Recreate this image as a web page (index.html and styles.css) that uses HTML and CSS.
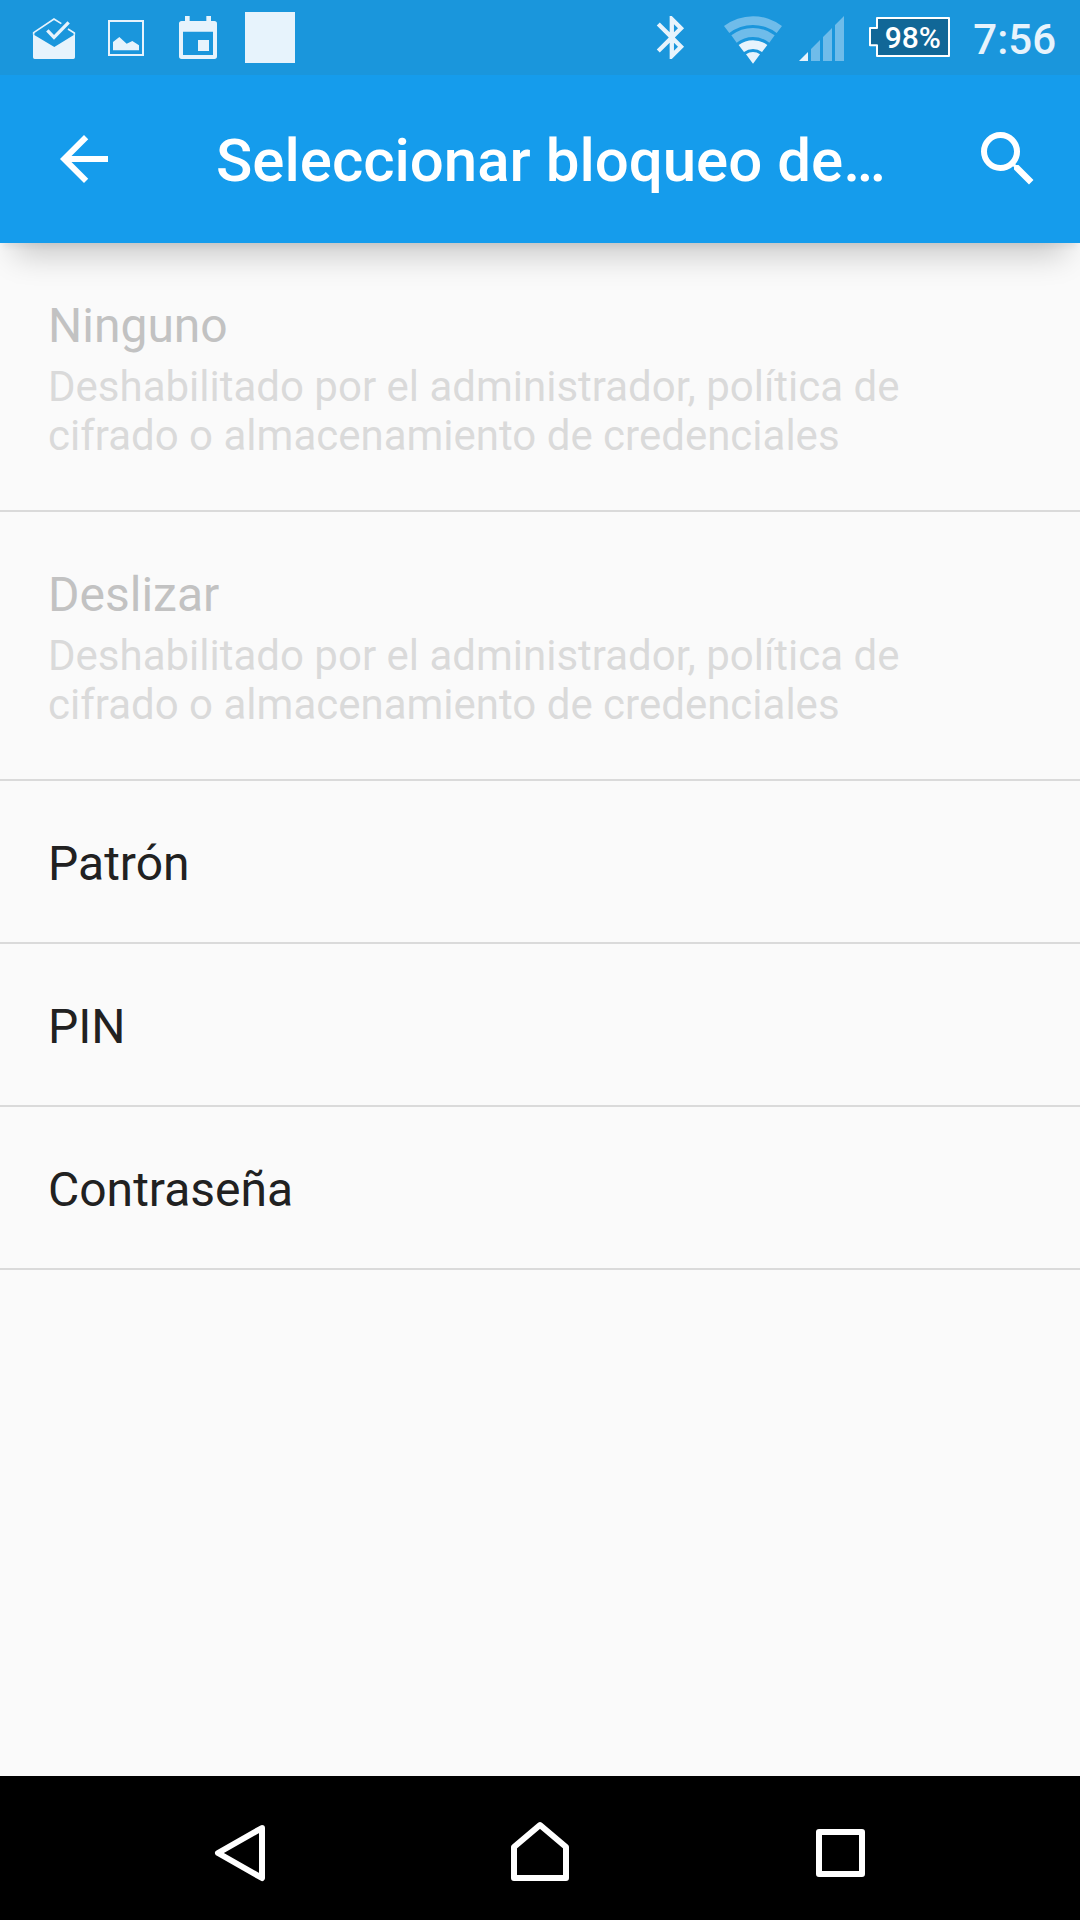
FILE: index.html
```html
<!DOCTYPE html>
<html lang="es">
<head>
<meta charset="utf-8">
<meta name="viewport" content="width=device-width, initial-scale=1">
<title>Seleccionar bloqueo</title>
<link rel="stylesheet" href="styles.css">
</head>
<body>
<div class="screen">
  <div class="status">
    <div class="notifications">
      <svg class="status-icon" viewBox="54 0 216 225" aria-hidden="true">
        <path d="M99 103L163 141L225 103V172Q225 177 220 177H104Q99 177 99 172Z" fill="currentColor"/>
        <path d="M101 104V98L162 57L184 71M204 87L223 99V104" fill="none" stroke="currentColor" stroke-width="5"/>
        <path d="M142 91L162 112L206 67" fill="none" stroke="currentColor" stroke-width="10"/>
      </svg>
      <svg class="status-icon" viewBox="270 0 216 225" aria-hidden="true">
        <rect x="327" y="63" width="102" height="102" fill="none" stroke="currentColor" stroke-width="6"/>
        <path d="M339 151V126L358 111L380 131L397 123L417 136V151Z" fill="currentColor"/>
      </svg>
      <svg class="status-icon" viewBox="486 0 216 225" aria-hidden="true">
        <path fill="currentColor" fill-rule="evenodd" d="M555 48H569V63H619V48H633V63H643Q651 63 651 71V169Q651 177 643 177H545Q537 177 537 169V71Q537 63 545 63H555ZM549 95V165H639V95ZM594 120H627V153H594Z"/>
      </svg>
      <svg class="status-icon" viewBox="702 0 216 225" aria-hidden="true">
        <rect x="735" y="36" width="150" height="153" fill="currentColor"/>
      </svg>
    </div>
    <div class="system">
      <div class="radios">
        <svg class="status-icon" viewBox="12 0 216 225" aria-hidden="true">
          <path transform="translate(45 35) scale(6.45)" fill="currentColor" d="M17.71 7.71L12 2h-1v7.59L6.41 5 5 6.41 10.59 12 5 17.59 6.41 19 11 14.41V22h1l5.71-5.71-4.3-4.29 4.3-4.29zM13 5.83l1.88 1.88L13 9.59V5.83zm1.88 10.46L13 18.17v-3.76l1.88 1.88z"/>
        </svg>
        <svg class="status-icon" viewBox="258 0 216 225" aria-hidden="true">
          <path class="faint" d="M279 78A143 143 0 0 1 453 78L437 99A116 116 0 0 0 295 99ZM301 106A107 107 0 0 1 431 106L415 128A80 80 0 0 0 317 128Z"/>
          <path fill="currentColor" d="M323 135A71 71 0 0 1 409 135L393 156A44 44 0 0 0 339 156ZM345 163A35 35 0 0 1 387 163L366 191Z"/>
        </svg>
        <svg class="signal-icon" viewBox="504 0 141 225" aria-hidden="true">
          <path class="faint" d="M540 147L567 120V183H540ZM576 111L603 84V183H576ZM612 75L639 48V183H612Z"/>
          <path fill="currentColor" d="M504 183L531 156V183Z"/>
        </svg>
      </div>
      <div class="battery">
        <svg class="battery-icon" viewBox="717 0 243 225" aria-hidden="true">
          <path d="M741 54H957V168H741V136H720V84H741Z" fill="#116797" stroke="#fff" stroke-width="6" stroke-linejoin="round"/>
        </svg>
        <span class="battery-level">98%</span>
      </div>
      <time class="clock">7:56</time>
    </div>
  </div>

  <header class="appbar">
    <button class="back" type="button" aria-label="Atrás">
      <svg class="action-icon" viewBox="0 0 24 24"><path fill="currentColor" d="M20 11H7.83l5.59-5.59L12 4l-8 8 8 8 1.41-1.41L7.83 13H20v-2z"/></svg>
    </button>
    <h1 class="title">Seleccionar bloqueo de…</h1>
    <button class="search" type="button" aria-label="Buscar">
      <svg class="action-icon" viewBox="0 0 24 24"><path fill="currentColor" d="M15.5 14h-.79l-.28-.27A6.471 6.471 0 0 0 16 9.500 6.500 6.500 0 1 0 9.500 16c1.610 0 3.090-.59 4.230-1.570l.27.28v.79l5 4.990L20.490 19l-4.990-5zm-6 0C7.010 14 5 11.990 5 9.500S7.010 5 9.500 5 14 7.010 14 9.500 11.990 14 9.500 14z"/></svg>
    </button>
  </header>

  <main class="content">
    <ul class="options">
      <li><button class="option" type="button" disabled>
        <span class="name">Ninguno</span>
        <span class="summary">Deshabilitado por el administrador, política de cifrado o almacenamiento de credenciales</span>
      </button></li>
      <li><button class="option" type="button" disabled>
        <span class="name">Deslizar</span>
        <span class="summary">Deshabilitado por el administrador, política de cifrado o almacenamiento de credenciales</span>
      </button></li>
      <li><button class="option" type="button"><span class="name">Patrón</span></button></li>
      <li><button class="option" type="button"><span class="name">PIN</span></button></li>
      <li><button class="option" type="button"><span class="name">Contraseña</span></button></li>
    </ul>
  </main>

  <nav class="navbar">
    <button class="nav-button" type="button" aria-label="Volver">
      <svg class="nav-icon" viewBox="0 0 96 96"><path d="M70 28L26 53L70 78Z"/></svg>
    </button>
    <button class="nav-button" type="button" aria-label="Inicio">
      <svg class="nav-icon" viewBox="0 0 96 96"><path d="M22 78V47L48 25L74 47V78Z"/></svg>
    </button>
    <button class="nav-button" type="button" aria-label="Recientes">
      <svg class="nav-icon" viewBox="0 0 96 96"><path d="M27 32H70V74H27Z"/></svg>
    </button>
  </nav>
</div>
</body>
</html>
```

FILE: styles.css
```css
* {
  box-sizing: border-box;
}

body {
  margin: 0;
  background: #fafafa;
  color: #212121;
  font-family: Roboto, "Noto Sans", sans-serif;
}

button {
  margin: 0;
  padding: 0;
  border: 0;
  background: none;
  color: inherit;
  font: inherit;
}

svg {
  display: block;
  flex: none;
}

.screen {
  display: flex;
  flex-direction: column;
  min-height: 100vh;
}

/* Status bar */
.status {
  display: flex;
  justify-content: space-between;
  padding: 0 24px 0 18px;
  background: #1a96dc;
  color: #e7f3fc;
}

.notifications,
.system,
.radios {
  display: flex;
  align-items: center;
}

.system {
  gap: 23px;
}

.radios {
  gap: 10px;
}

.status-icon {
  width: 72px;
  height: 75px;
}

.signal-icon {
  width: 47px;
  height: 75px;
}

.faint {
  fill: #6fbcea;
}

.battery {
  display: grid;
  place-items: center;
}

.battery-icon,
.battery-level {
  grid-area: 1 / 1;
}

.battery-icon {
  width: 81px;
  height: 75px;
}

.battery-level {
  padding-left: 6px;
  color: #fff;
  font-size: 30px;
  font-weight: 500;
  line-height: 36px;
}

.clock {
  padding-top: 4px;
  font-size: 42px;
  font-weight: 500;
  line-height: 48px;
}

/* App bar */
.appbar {
  position: relative;
  display: flex;
  align-items: center;
  background: #159cec;
  color: #fff;
  box-shadow: 0 7px 6px -3px rgba(0, 0, 0, 0.05), 0 26px 30px -14px rgba(0, 0, 0, 0.2);
}

.back,
.search {
  display: flex;
  justify-content: center;
  padding: 48px 0;
}

.back {
  width: 168px;
}

.search {
  width: 144px;
}

.action-icon {
  width: 72px;
  height: 72px;
}

.title {
  flex: 1;
  margin: 0;
  padding: 4px 0 0 48px;
  font-size: 60px;
  font-weight: 500;
  line-height: 72px;
  white-space: nowrap;
}

/* Options */
.content {
  flex: 1;
}

.options {
  margin: 0;
  padding: 0;
  list-style: none;
}

.option {
  display: flex;
  flex-direction: column;
  gap: 8px;
  width: 100%;
  padding: 54px 96px 50px 48px;
  border-bottom: 2px solid #dadada;
  text-align: left;
}

.name {
  font-size: 48px;
  line-height: 57px;
}

.summary {
  font-size: 42px;
  line-height: 49px;
}

.option:disabled .name {
  color: #c2c2c2;
}

.option:disabled .summary {
  color: #dadada;
}

/* Navigation bar */
.navbar {
  display: grid;
  grid-template-columns: repeat(3, 1fr);
  padding: 0 90px;
  background: #000;
}

.nav-button {
  display: flex;
  justify-content: center;
  padding: 24px 0;
}

.nav-icon {
  width: 96px;
  height: 96px;
  fill: none;
  stroke: #fff;
  stroke-width: 6;
  stroke-linejoin: round;
}
```
